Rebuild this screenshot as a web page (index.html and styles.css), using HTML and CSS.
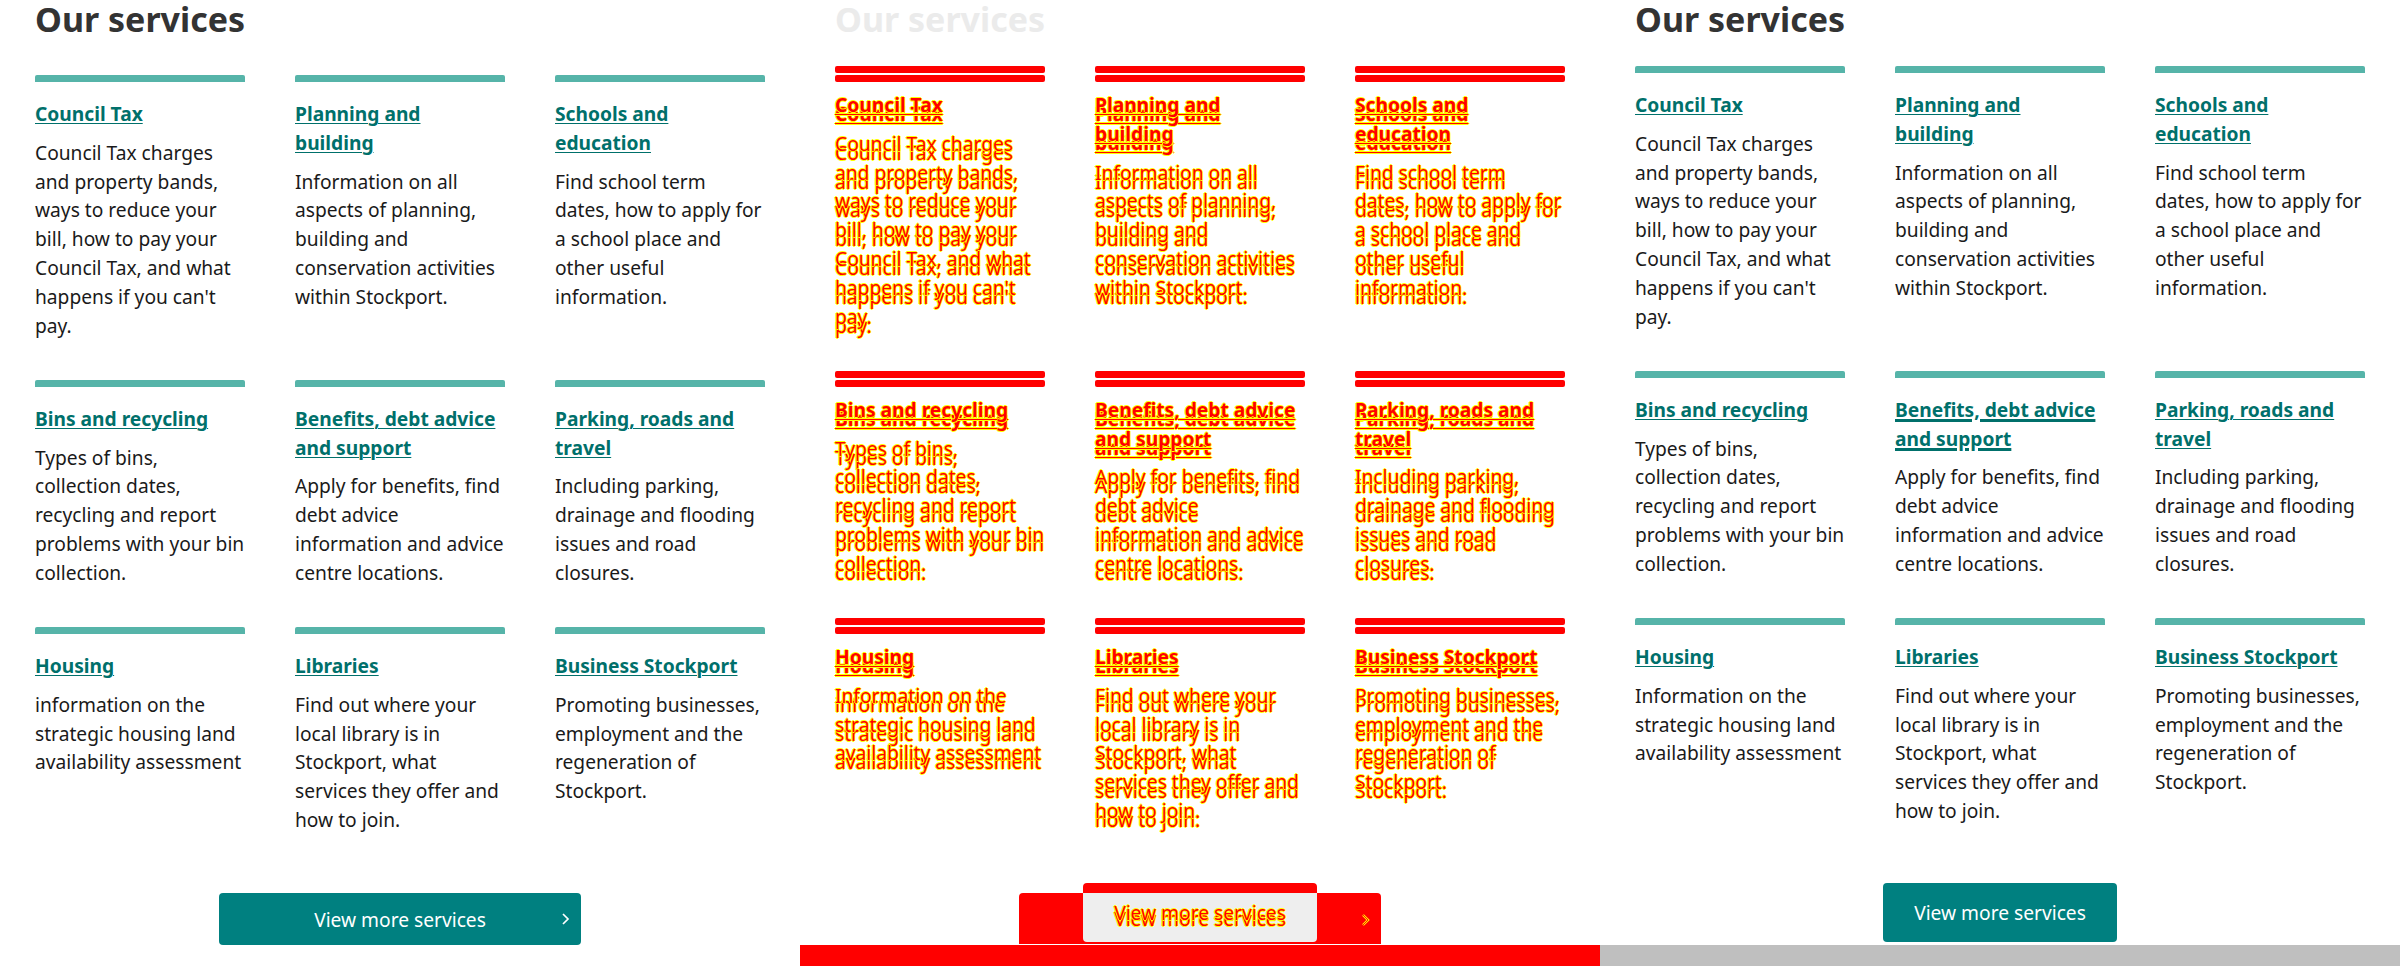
FILE: index.html
```html
<!DOCTYPE html>
<html lang="en">
<head>
<meta charset="utf-8">
<title>Our services</title>
<link rel="stylesheet" href="styles.css">
</head>
<body>
<div class="panels">

  <!-- LEFT: original -->
  <section class="panel">
    <div class="content">
      <h2 class="heading">Our services</h2>
      <div class="grid grid-a">
        <div class="card"><div class="bar"></div><h3 class="title"><a href="#">Council Tax</a></h3><p class="desc">Council Tax charges<br>and property bands,<br>ways to reduce your<br>bill, how to pay your<br>Council Tax, and what<br>happens if you can't<br>pay.</p></div>
        <div class="card"><div class="bar"></div><h3 class="title"><a href="#">Planning and<br>building</a></h3><p class="desc">Information on all<br>aspects of planning,<br>building and<br>conservation activities<br>within Stockport.</p></div>
        <div class="card"><div class="bar"></div><h3 class="title"><a href="#">Schools and<br>education</a></h3><p class="desc">Find school term<br>dates, how to apply for<br>a school place and<br>other useful<br>information.</p></div>
        <div class="card"><div class="bar"></div><h3 class="title"><a href="#">Bins and recycling</a></h3><p class="desc">Types of bins,<br>collection dates,<br>recycling and report<br>problems with your bin<br>collection.</p></div>
        <div class="card"><div class="bar"></div><h3 class="title"><a href="#">Benefits, debt advice<br>and support</a></h3><p class="desc">Apply for benefits, find<br>debt advice<br>information and advice<br>centre locations.</p></div>
        <div class="card"><div class="bar"></div><h3 class="title"><a href="#">Parking, roads and<br>travel</a></h3><p class="desc">Including parking,<br>drainage and flooding<br>issues and road<br>closures.</p></div>
        <div class="card"><div class="bar"></div><h3 class="title"><a href="#">Housing</a></h3><p class="desc">information on the<br>strategic housing land<br>availability assessment</p></div>
        <div class="card"><div class="bar"></div><h3 class="title"><a href="#">Libraries</a></h3><p class="desc">Find out where your<br>local library is in<br>Stockport, what<br>services they offer and<br>how to join.</p></div>
        <div class="card"><div class="bar"></div><h3 class="title"><a href="#">Business Stockport</a></h3><p class="desc">Promoting businesses,<br>employment and the<br>regeneration of<br>Stockport.</p></div>
      </div>
      <div class="btn-row">
        <a class="btn btn-a" href="#"><span class="btn-text">View more services</span><svg class="chev" width="9" height="12" viewBox="0 0 9 12"><polyline points="2,1 7,6 2,11" fill="none" stroke="#fff" stroke-width="1.7"/></svg></a>
      </div>
    </div>
  </section>

  <!-- MIDDLE: diff -->
  <section class="panel diff">
    <div class="content">
      <h2 class="heading faded">Our services</h2>
      <div class="stack">
        <div class="grid grid-a red">
          <div class="card"><div class="bar"></div><h3 class="title"><a href="#">Council Tax</a></h3><p class="desc">Council Tax charges<br>and property bands,<br>ways to reduce your<br>bill, how to pay your<br>Council Tax, and what<br>happens if you can't<br>pay.</p></div>
          <div class="card"><div class="bar"></div><h3 class="title"><a href="#">Planning and<br>building</a></h3><p class="desc">Information on all<br>aspects of planning,<br>building and<br>conservation activities<br>within Stockport.</p></div>
          <div class="card"><div class="bar"></div><h3 class="title"><a href="#">Schools and<br>education</a></h3><p class="desc">Find school term<br>dates, how to apply for<br>a school place and<br>other useful<br>information.</p></div>
          <div class="card"><div class="bar"></div><h3 class="title"><a href="#">Bins and recycling</a></h3><p class="desc">Types of bins,<br>collection dates,<br>recycling and report<br>problems with your bin<br>collection.</p></div>
          <div class="card"><div class="bar"></div><h3 class="title"><a href="#">Benefits, debt advice<br>and support</a></h3><p class="desc">Apply for benefits, find<br>debt advice<br>information and advice<br>centre locations.</p></div>
          <div class="card"><div class="bar"></div><h3 class="title"><a href="#">Parking, roads and<br>travel</a></h3><p class="desc">Including parking,<br>drainage and flooding<br>issues and road<br>closures.</p></div>
          <div class="card"><div class="bar"></div><h3 class="title"><a href="#">Housing</a></h3><p class="desc">information on the<br>strategic housing land<br>availability assessment</p></div>
          <div class="card"><div class="bar"></div><h3 class="title"><a href="#">Libraries</a></h3><p class="desc">Find out where your<br>local library is in<br>Stockport, what<br>services they offer and<br>how to join.</p></div>
          <div class="card"><div class="bar"></div><h3 class="title"><a href="#">Business Stockport</a></h3><p class="desc">Promoting businesses,<br>employment and the<br>regeneration of<br>Stockport.</p></div>
        </div>
        <div class="grid grid-b red">
          <div class="card"><div class="bar"></div><h3 class="title"><a href="#">Council Tax</a></h3><p class="desc">Council Tax charges<br>and property bands,<br>ways to reduce your<br>bill, how to pay your<br>Council Tax, and what<br>happens if you can't<br>pay.</p></div>
          <div class="card"><div class="bar"></div><h3 class="title"><a href="#">Planning and<br>building</a></h3><p class="desc">Information on all<br>aspects of planning,<br>building and<br>conservation activities<br>within Stockport.</p></div>
          <div class="card"><div class="bar"></div><h3 class="title"><a href="#">Schools and<br>education</a></h3><p class="desc">Find school term<br>dates, how to apply for<br>a school place and<br>other useful<br>information.</p></div>
          <div class="card"><div class="bar"></div><h3 class="title"><a href="#">Bins and recycling</a></h3><p class="desc">Types of bins,<br>collection dates,<br>recycling and report<br>problems with your bin<br>collection.</p></div>
          <div class="card"><div class="bar"></div><h3 class="title"><a href="#">Benefits, debt advice<br>and support</a></h3><p class="desc">Apply for benefits, find<br>debt advice<br>information and advice<br>centre locations.</p></div>
          <div class="card"><div class="bar"></div><h3 class="title"><a href="#">Parking, roads and<br>travel</a></h3><p class="desc">Including parking,<br>drainage and flooding<br>issues and road<br>closures.</p></div>
          <div class="card"><div class="bar"></div><h3 class="title"><a href="#">Housing</a></h3><p class="desc">Information on the<br>strategic housing land<br>availability assessment</p></div>
          <div class="card"><div class="bar"></div><h3 class="title"><a href="#">Libraries</a></h3><p class="desc">Find out where your<br>local library is in<br>Stockport, what<br>services they offer and<br>how to join.</p></div>
          <div class="card"><div class="bar"></div><h3 class="title"><a href="#">Business Stockport</a></h3><p class="desc">Promoting businesses,<br>employment and the<br>regeneration of<br>Stockport.</p></div>
        </div>
      </div>
      <div class="dfoot">
        <div class="d-a"></div>
        <div class="d-b"></div>
        <div class="d-ov"></div>
        <div class="d-t d-t1">View more services</div>
        <div class="d-t d-t2">View more services</div>
        <svg class="d-chev" width="9" height="12" viewBox="0 0 9 12"><polyline points="2,1 7,6 2,11" fill="none" stroke="#ffff00" stroke-width="2.4"/><polyline points="2,1 7,6 2,11" fill="none" stroke="#ff0000" stroke-width="0.9"/></svg>
      </div>
    </div>
    <div class="strip strip-red"></div>
  </section>

  <!-- RIGHT: new -->
  <section class="panel">
    <div class="content">
      <h2 class="heading">Our services</h2>
      <div class="grid grid-b">
        <div class="card"><div class="bar"></div><h3 class="title"><a href="#">Council Tax</a></h3><p class="desc">Council Tax charges<br>and property bands,<br>ways to reduce your<br>bill, how to pay your<br>Council Tax, and what<br>happens if you can't<br>pay.</p></div>
        <div class="card"><div class="bar"></div><h3 class="title"><a href="#">Planning and<br>building</a></h3><p class="desc">Information on all<br>aspects of planning,<br>building and<br>conservation activities<br>within Stockport.</p></div>
        <div class="card"><div class="bar"></div><h3 class="title"><a href="#">Schools and<br>education</a></h3><p class="desc">Find school term<br>dates, how to apply for<br>a school place and<br>other useful<br>information.</p></div>
        <div class="card"><div class="bar"></div><h3 class="title"><a href="#">Bins and recycling</a></h3><p class="desc">Types of bins,<br>collection dates,<br>recycling and report<br>problems with your bin<br>collection.</p></div>
        <div class="card"><div class="bar"></div><h3 class="title"><a class="thick" href="#">Benefits, debt advice<br>and support</a></h3><p class="desc">Apply for benefits, find<br>debt advice<br>information and advice<br>centre locations.</p></div>
        <div class="card"><div class="bar"></div><h3 class="title"><a href="#">Parking, roads and<br>travel</a></h3><p class="desc">Including parking,<br>drainage and flooding<br>issues and road<br>closures.</p></div>
        <div class="card"><div class="bar"></div><h3 class="title"><a href="#">Housing</a></h3><p class="desc">Information on the<br>strategic housing land<br>availability assessment</p></div>
        <div class="card"><div class="bar"></div><h3 class="title"><a href="#">Libraries</a></h3><p class="desc">Find out where your<br>local library is in<br>Stockport, what<br>services they offer and<br>how to join.</p></div>
        <div class="card"><div class="bar"></div><h3 class="title"><a href="#">Business Stockport</a></h3><p class="desc">Promoting businesses,<br>employment and the<br>regeneration of<br>Stockport.</p></div>
      </div>
      <div class="btn-row">
        <a class="btn btn-b" href="#">View more services</a>
      </div>
    </div>
    <div class="strip strip-gray"></div>
  </section>

</div>
</body>
</html>
```

FILE: styles.css
```css
* { box-sizing: border-box; }

html, body {
  margin: 0;
  padding: 0;
}

body {
  width: 2400px;
  height: 966px;
  overflow: hidden;
  background: #ffffff;
  font-family: "Noto Sans", "Open Sans", sans-serif;
}

.panels {
  display: flex;
  width: 2400px;
  height: 966px;
}

.panel {
  flex: 0 0 800px;
  width: 800px;
  height: 966px;
  display: flex;
  flex-direction: column;
  overflow: hidden;
  background: #ffffff;
}

.content {
  flex-shrink: 0;
  padding: 0 35px;
}

.heading {
  margin: 0;
  font-size: 34px;
  line-height: 38px;
  font-weight: 700;
  color: #333333;
}

.heading.faded { color: #ebebeb; }

.grid {
  display: grid;
  grid-template-columns: repeat(3, 210px);
  column-gap: 50px;
  row-gap: 39.4px;
  align-items: start;
  align-content: start;
}

.grid-a { margin-top: 37px; }
.grid-b { margin-top: 28px; }

.bar {
  height: 7px;
  background: #56b4a9;
  border-radius: 2px 2px 0 0;
}

.title {
  margin: 18px 0 0;
  font-size: 19.2px;
  line-height: 28.8px;
  font-weight: 700;
  white-space: nowrap;
}

.title a {
  color: #00706b;
  text-decoration: underline;
  text-decoration-thickness: 1px;
  text-underline-offset: 2px;
}

.title a.thick { text-decoration-thickness: 3px; }

.desc {
  margin: 10px 0 0;
  font-size: 19.2px;
  line-height: 28.8px;
  color: #1a1a1a;
  white-space: nowrap;
}

.btn-row {
  display: flex;
  justify-content: center;
}

.btn {
  color: #ffffff;
  background: #008080;
  border-radius: 4px;
  text-decoration: none;
  font-size: 19.2px;
}

.btn-a {
  margin-top: 58.6px;
  width: 362px;
  height: 52px;
  display: grid;
  grid-template-columns: 1fr auto 1fr;
  align-items: center;
}

.btn-a .btn-text { grid-column: 2; }

.btn-a .chev {
  grid-column: 3;
  justify-self: end;
  margin-right: 11px;
}

.btn-b {
  margin-top: 57.6px;
  padding: 16px 31px;
  line-height: 27px;
}

/* diff panel */
.stack {
  display: grid;
  align-items: start;
}

.stack > .grid {
  grid-area: 1 / 1;
  align-self: start;
}

.red .bar { background: #ff0000; border-radius: 2px; }

.red .title a,
.red .desc {
  color: #ff0000;
  text-shadow: 1px 0 0 #ffff00, -1px 0 0 #ffff00, 0 1px 0 #ffff00, 0 -1px 0 #ffff00;
}

.dfoot {
  margin-top: 48.6px;
  display: grid;
  height: 61px;
}

.dfoot > * {
  grid-area: 1 / 1;
  justify-self: center;
}

.d-a {
  margin-top: 10px;
  width: 362px;
  height: 51px;
  background: #ff0000;
  border-radius: 4px 4px 0 0;
}

.d-b {
  width: 234px;
  height: 59px;
  background: #ff0000;
  border-radius: 4px;
}

.d-ov {
  margin-top: 10px;
  width: 234px;
  height: 49px;
  background: #eeeeee;
  border-radius: 0 0 4px 4px;
}

.d-t {
  font-size: 19.2px;
  color: #ff0000;
  text-shadow: 1px 0 0 #ffff00, -1px 0 0 #ffff00, 0 1px 0 #ffff00, 0 -1px 0 #ffff00;
  white-space: nowrap;
}

.d-t1 {
  margin-top: 10px;
  height: 52px;
  line-height: 52px;
}

.d-t2 {
  height: 59px;
  line-height: 59px;
}

.d-chev {
  justify-self: start;
  margin-left: 526px;
  margin-top: 31px;
}

.strip {
  flex-shrink: 0;
  margin-top: auto;
  height: 21px;
}

.strip-red { background: #ff0000; }
.strip-gray { background: #bfbfbf; }
```
